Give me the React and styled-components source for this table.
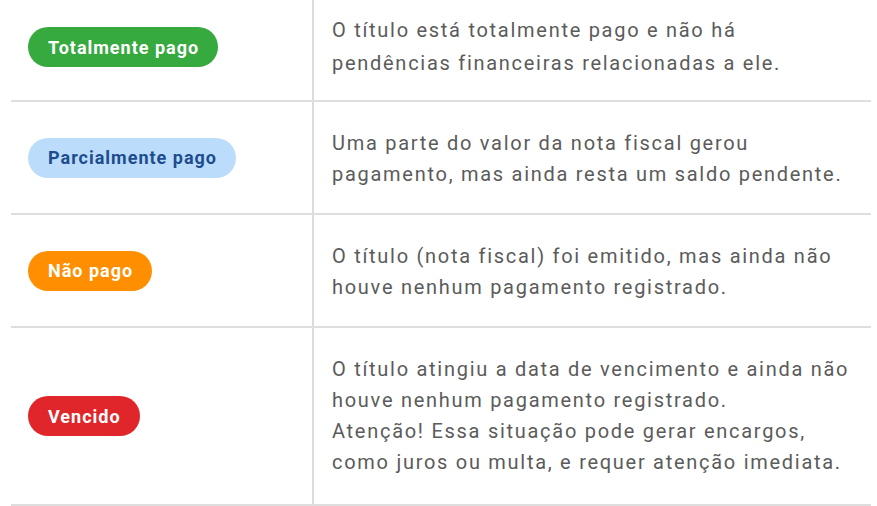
import React from 'react';
import styled, { createGlobalStyle } from 'styled-components';

const GlobalStyle = createGlobalStyle`
  html, body {
    margin: 0;
    padding: 0;
    background: #fff;
  }
  body {
    font-family: Roboto, "Noto Sans", "Liberation Sans", sans-serif;
  }
`;

const Table = styled.div`
  margin-left: 11px;
  width: 860px;
`;

const Row = styled.div`
  display: grid;
  grid-template-columns: 301px 1fr;
  border-bottom: 2px solid #dedede;
`;

const StatusCell = styled.div`
  display: flex;
  align-items: center;
  padding-left: 17px;
  padding-bottom: ${p => (p.$first ? '6px' : '0')};
`;

const DescCell = styled.div`
  border-left: 2px solid #dcdcdc;
  padding: ${p => (p.$first ? '14px 10px 20px 18px' : p.$last ? '26px 10px 26px 18px' : '26px 10px 23px 18px')};
  color: #5b5b5b;
  font-size: 20px;
  letter-spacing: 1.72px;
  line-height: ${p => (p.$first ? '33px' : '31px')};
  white-space: nowrap;
`;

const colors = {
  green: { bg: '#36a93f', fg: '#fff' },
  blue: { bg: '#bcdcfb', fg: '#1d4d8f' },
  orange: { bg: '#ff8f00', fg: '#fff' },
  red: { bg: '#e0262a', fg: '#fff' },
};

const Badge = styled.span`
  display: inline-flex;
  align-items: center;
  height: 40px;
  padding: 0 19px 0 20px;
  border-radius: 20px;
  background: ${p => colors[p.$tone].bg};
  color: ${p => colors[p.$tone].fg};
  font-size: 18px;
  font-weight: 700;
  letter-spacing: 1px;
  white-space: nowrap;
`;

const rows = [
  {
    label: 'Totalmente pago',
    tone: 'green',
    lines: ['O título está totalmente pago e não há', 'pendências financeiras relacionadas a ele.'],
  },
  {
    label: 'Parcialmente pago',
    tone: 'blue',
    lines: ['Uma parte do valor da nota fiscal gerou', 'pagamento, mas ainda resta um saldo pendente.'],
  },
  {
    label: 'Não pago',
    tone: 'orange',
    lines: ['O título (nota fiscal) foi emitido, mas ainda não', 'houve nenhum pagamento registrado.'],
  },
  {
    label: 'Vencido',
    tone: 'red',
    lines: [
      'O título atingiu a data de vencimento e ainda não',
      'houve nenhum pagamento registrado.',
      'Atenção! Essa situação pode gerar encargos,',
      'como juros ou multa, e requer atenção imediata.',
    ],
  },
];

const App = () => {
  return (
    <>
      <GlobalStyle />
      <Table>
        {rows.map((r, i) => (
          <Row key={r.label}>
            <StatusCell $first={i === 0}>
              <Badge $tone={r.tone}>{r.label}</Badge>
            </StatusCell>
            <DescCell $first={i === 0} $last={i === rows.length - 1}>
              {r.lines.map((l, j) => (
                <div key={j}>{l}</div>
              ))}
            </DescCell>
          </Row>
        ))}
      </Table>
    </>
  );
};

export default App;
